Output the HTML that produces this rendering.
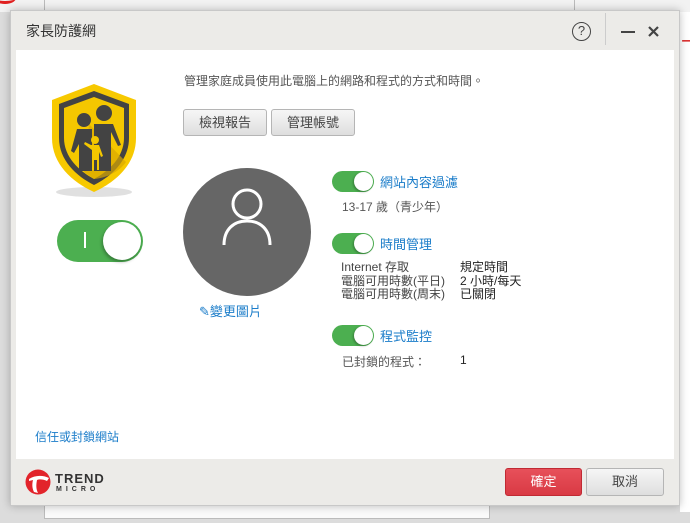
<!DOCTYPE html>
<html><head><meta charset="utf-8"><style>
*{margin:0;padding:0;box-sizing:border-box}
body{width:690px;height:523px;overflow:hidden;background:#dcdcdc;position:relative;font-family:"Liberation Sans","Noto Sans CJK TC",sans-serif;font-size:12px;color:#444}
.a{position:absolute}
.dlg{left:10px;top:10px;width:670px;height:496px;background:#ecebe8;border:1px solid #c8c8c8;box-shadow:0 0 8px rgba(0,0,0,.25)}
.btn{position:absolute;height:27px;border:1px solid #b5b5b5;border-radius:3px;background:linear-gradient(#f6f6f6,#dedede);font-size:13px;color:#444;text-align:center;line-height:25px}
.tg{position:absolute;width:42px;height:21px;border-radius:11px;background:#4caf50}
.tg:after{content:"";position:absolute;right:1px;top:1px;width:19px;height:19px;border-radius:50%;background:#fff;box-shadow:-1px 1px 2px rgba(0,0,0,.3)}
.lk{color:#1a7cc9;font-size:13px}
</style></head><body>
<div class="a" style="left:0;top:0;width:690px;height:12px;background:#f2f2f2"></div>
<div class="a" style="left:44px;top:0;width:1px;height:12px;background:#bbb"></div>
<div class="a" style="left:574px;top:0;width:1px;height:12px;background:#bbb"></div>
<div class="a" style="left:-6px;top:-8px;width:22px;height:12px;border-radius:50%;border-bottom:3px solid #e02020"></div>
<div class="a" style="left:680px;top:12px;width:10px;height:500px;background:#fff"></div>
<div class="a" style="left:681px;top:22px;color:#d33;font-size:22px;line-height:24px">上</div>
<div class="a" style="left:44px;top:505px;width:446px;height:14px;background:#fafafa;border:1px solid #bbb"></div>
<div class="a dlg"></div>
<div class="a" style="left:26px;top:21px;font-size:14px;color:#333">家長防護網</div>
<div class="a" style="left:572px;top:22px;width:19px;height:19px;border:1.5px solid #444;border-radius:50%;text-align:center;font-size:13px;line-height:16px;color:#444">?</div>
<div class="a" style="left:605px;top:13px;width:1px;height:32px;background:#ccc"></div>
<div class="a" style="left:621px;top:31px;width:14px;height:2px;background:#444"></div>
<svg class="a" style="left:648px;top:26px" width="11" height="11"><path d="M1 1L10 10M10 1L1 10" stroke="#444" stroke-width="2.2"/></svg>
<div class="a" style="left:16px;top:50px;width:658px;height:409px;background:#fff"></div>
<svg class="a" style="left:44px;top:82px" width="100" height="118" viewBox="0 0 100 118">
<ellipse cx="50" cy="110" rx="38" ry="5" fill="#000" opacity=".12"/>
<path d="M50 2 L92 18 V56 C92 82 72 100 50 110 C28 100 8 82 8 56 V18 Z" fill="#f7c900"/>
<path d="M50 9 L85 22 V56 C85 78 68 94 50 103 C32 94 15 78 15 56 V22 Z" fill="#434343"/>
<path d="M50 15 L80 26 V56 C80 75 65 89 50 97 C35 89 20 75 20 56 V26 Z" fill="#f4c700"/>
<path d="M45 42 L82 80 C75 90 62 96 50 97 L40 90 Z" fill="#d9a800" opacity=".7"/>
<circle cx="60" cy="31" r="8" fill="#434343"/>
<circle cx="40" cy="38" r="7" fill="#434343"/>
<path d="M50 42 H69 L77 63 L74 64 L67 50 V89 H50 Z" fill="#434343"/>
<path d="M33 47 H48 V89 H35 V62 L30 71 L27 69 Z" fill="#434343"/>
<circle cx="51" cy="58" r="4" fill="#f4c700"/>
<path d="M47 63 H55 L59 74 L57 75 L55 70 V88 H53 V78 H50 V88 H48 V68 L40 62 L41 60 Z" fill="#f4c700"/>
</svg>
<div class="a" style="left:57px;top:220px;width:86px;height:42px;border-radius:21px;background:#4caf50"></div>
<div class="a" style="left:84px;top:232px;width:2px;height:16px;background:#fff"></div>
<div class="a" style="left:103px;top:222px;width:38px;height:38px;border-radius:50%;background:#fff;box-shadow:-1px 2px 3px rgba(0,0,0,.3)"></div>
<div class="a" style="left:184px;top:72px;color:#555">管理家庭成員使用此電腦上的網路和程式的方式和時間。</div>
<div class="btn" style="left:183px;top:109px;width:84px">檢視報告</div>
<div class="btn" style="left:271px;top:109px;width:84px">管理帳號</div>
<div class="a" style="left:183px;top:168px;width:128px;height:128px;border-radius:50%;background:#666"></div>
<svg class="a" style="left:219px;top:187px" width="56" height="60" viewBox="0 0 56 60"><circle cx="28" cy="17" r="14" fill="none" stroke="#fff" stroke-width="3"/><path d="M5 58 C5 42 15 34 28 34 C41 34 51 42 51 58" fill="none" stroke="#fff" stroke-width="3"/></svg>
<div class="a lk" style="left:199px;top:301px">✎變更圖片</div>
<div class="tg" style="left:332px;top:171px"></div>
<div class="a lk" style="left:380px;top:172px">網站內容過濾</div>
<div class="a" style="left:342px;top:198px;color:#555">13-17 歲（青少年）</div>
<div class="tg" style="left:332px;top:233px"></div>
<div class="a lk" style="left:380px;top:234px">時間管理</div>
<div class="a" style="left:341px;top:261px;line-height:13.5px;color:#444">Internet 存取<br>電腦可用時數(平日)<br>電腦可用時數(周末)</div>
<div class="a" style="left:460px;top:261px;line-height:13.5px;color:#222">規定時間<br>2 小時/每天<br>已關閉</div>
<div class="tg" style="left:332px;top:325px"></div>
<div class="a lk" style="left:380px;top:326px">程式監控</div>
<div class="a" style="left:342px;top:353px;color:#555">已封鎖的程式：</div>
<div class="a" style="left:460px;top:353px;color:#222">1</div>
<div class="a lk" style="left:35px;top:428px;font-size:12px">信任或封鎖網站</div>
<svg class="a" style="left:25px;top:469px" width="26" height="26" viewBox="0 0 26 26"><circle cx="13" cy="13" r="12.5" fill="#e2242b"/><path d="M4 10 C10 6 18 6 24 9 L22 12 C18 10 14 10 12 11 C11 16 11 20 13 24 L9 23 C7 19 7 15 8 11 L4 12 Z" fill="#fff"/></svg>
<div class="a" style="left:55px;top:472px;font-size:13px;font-weight:bold;color:#333;letter-spacing:1px;line-height:13px">TREND</div>
<div class="a" style="left:56px;top:486px;font-size:7px;font-weight:bold;color:#333;letter-spacing:4px">MICRO</div>
<div class="btn" style="left:505px;top:468px;width:77px;height:28px;background:linear-gradient(#e7505a,#d93a44);border-color:#c02a33;color:#fff;line-height:26px">確定</div>
<div class="btn" style="left:586px;top:468px;width:78px;height:28px;line-height:26px">取消</div>
</body></html>
